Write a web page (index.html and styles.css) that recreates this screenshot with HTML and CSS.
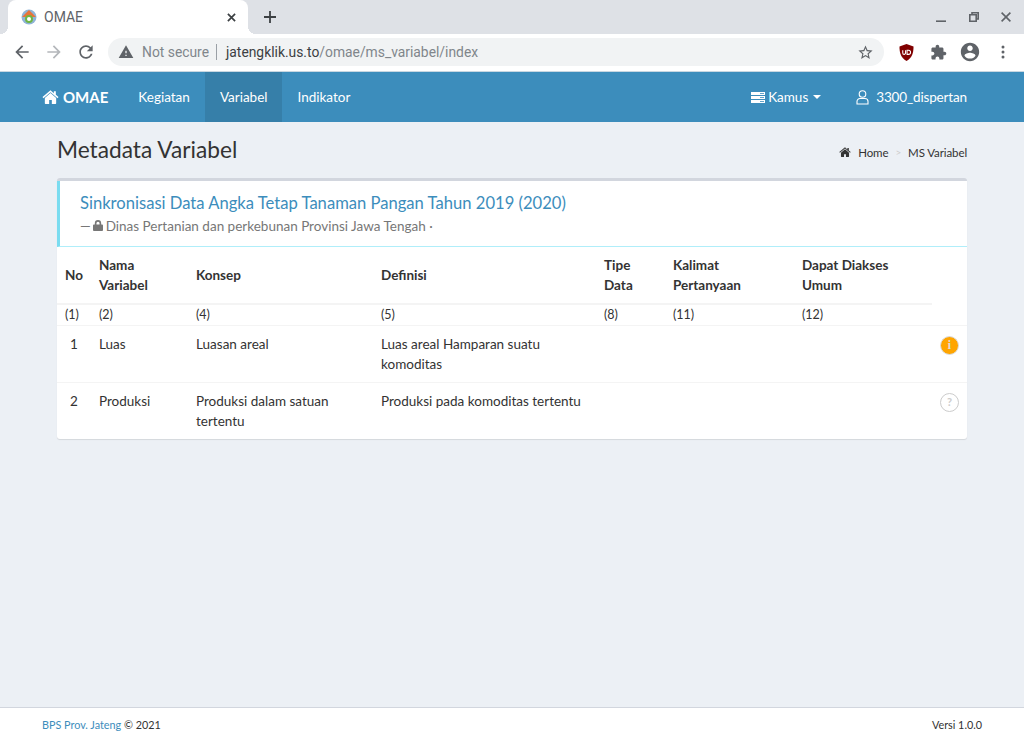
FILE: index.html
```html
<!DOCTYPE html>
<html lang="en">
<head>
    <meta charset="UTF-8">
    <title>OMAE</title>
    <link rel="stylesheet" href="styles.css">
</head>
<body>
    <div class="tabstrip">
        <div class="tab">
            <svg class="favicon" viewBox="0 0 16 16"><circle cx="8" cy="8" r="7.500" fill="#8fb4d8"/><path d="M8 1 1 8h14z" fill="#e8743b"/><circle cx="8" cy="10" r="4" fill="#6fb544"/><circle cx="8" cy="10" r="2" fill="#fff"/></svg>
            <span class="tab-title">OMAE</span>
            <svg class="tab-close" viewBox="0 0 10 10"><path d="M1 1l8 8M9 1l-8 8" stroke="#3c4043" stroke-width="1.900" fill="none"/></svg>
        </div>
        <svg class="new-tab" viewBox="0 0 12 12"><path d="M6 0v12M0 6h12" stroke="#3c4043" stroke-width="1.800" fill="none"/></svg>
        <div class="window-btns">
            <svg viewBox="0 0 10 10"><path d="M0 9.200h10" stroke="#5f6368" stroke-width="1.600"/></svg>
            <svg viewBox="0 0 10 10"><path d="M3 2.800V.8h6.200v6.200H7.200" stroke="#5f6368" stroke-width="1.600" fill="none"/><path d="M.8 2.800h6.400v6.400H.8z" stroke="#5f6368" stroke-width="1.600" fill="none"/></svg>
            <svg viewBox="0 0 10 10"><path d="M.6.6l8.800 8.800M9.400.6L.6 9.400" stroke="#5f6368" stroke-width="1.600" fill="none"/></svg>
        </div>
    </div>

    <div class="toolbar">
        <svg class="tool-icon" viewBox="0 0 24 24"><path fill="#5f6368" d="M20 11H7.830l5.590-5.590L12 4l-8 8 8 8 1.410-1.410L7.830 13H20v-2z"/></svg>
        <svg class="tool-icon" viewBox="0 0 24 24"><path fill="#b4b7bb" d="M12 4l-1.410 1.410L16.170 11H4v2h12.170l-5.580 5.590L12 20l8-8z"/></svg>
        <svg class="tool-icon" viewBox="0 0 24 24"><path fill="#5f6368" d="M17.650 6.350C16.200 4.900 14.210 4 12 4c-4.420 0-7.990 3.580-7.990 8s3.570 8 7.990 8c3.730 0 6.840-2.550 7.730-6h-2.080c-.82 2.330-3.040 4-5.650 4-3.310 0-6-2.690-6-6s2.690-6 6-6c1.660 0 3.140.69 4.220 1.780L13 11h7V4l-2.350 2.350z"/></svg>
        <div class="omnibox">
            <svg class="warn" viewBox="0 0 24 24"><path fill="#5f6368" d="M1 21h22L12 2 1 21zm12-3h-2v-2h2v2zm0-4h-2v-4h2v4z"/></svg>
            <span class="not-secure">Not secure</span>
            <span class="omni-sep"></span>
            <span class="url"><b>jatengklik.us.to</b>/omae/ms_variabel/index</span>
            <svg class="star" viewBox="0 0 24 24"><path fill="#5f6368" d="M22 9.240l-7.190-.62L12 2 9.190 8.630 2 9.240l5.460 4.730L5.820 21 12 17.270 18.180 21l-1.630-7.030L22 9.240zM12 15.400l-3.760 2.270 1-4.280-3.320-2.880 4.380-.38L12 6.100l1.710 4.040 4.380.38-3.320 2.880 1 4.280L12 15.400z"/></svg>
        </div>
        <div class="extensions">
            <svg class="ublock" viewBox="0 0 16 18"><path fill="#800000" d="M8 0l7.500 2.500c0 7-1.500 12-7.500 15.500C2 14.500.5 9.500.5 2.500z"/><path d="M4 6.500v3a1.500 1.500 0 0 0 3 0v-3M8.600 6.500h1.500a2 2 0 0 1 0 4.500H8.600z" stroke="#fff" stroke-width="1.100" fill="none"/></svg>
            <svg class="ext-icon" viewBox="0 0 24 24"><path fill="#5f6368" d="M20.500 11H19V7c0-1.100-.9-2-2-2h-4V3.500C13 2.120 11.880 1 10.500 1S8 2.120 8 3.500V5H4c-1.100 0-1.990.9-1.990 2v3.800H3.500c1.490 0 2.700 1.210 2.700 2.700s-1.210 2.700-2.700 2.700H2V20c0 1.100.9 2 2 2h3.800v-1.500c0-1.490 1.210-2.700 2.700-2.700 1.490 0 2.700 1.210 2.700 2.700V22H17c1.100 0 2-.9 2-2v-4h1.500c1.380 0 2.500-1.120 2.500-2.500S21.880 11 20.500 11z"/></svg>
            <svg class="ext-icon big" viewBox="0 0 24 24"><path fill="#5f6368" d="M12 2C6.480 2 2 6.480 2 12s4.480 10 10 10 10-4.480 10-10S17.520 2 12 2zm0 3c1.660 0 3 1.340 3 3s-1.340 3-3 3-3-1.340-3-3 1.340-3 3-3zm0 14.200c-2.500 0-4.710-1.280-6-3.220.03-1.990 4-3.080 6-3.080 1.990 0 5.970 1.090 6 3.080-1.290 1.940-3.500 3.220-6 3.220z"/></svg>
            <svg class="dots" viewBox="0 0 4 14"><circle cx="2" cy="2" r="1.500" fill="#5f6368"/><circle cx="2" cy="7" r="1.500" fill="#5f6368"/><circle cx="2" cy="12" r="1.500" fill="#5f6368"/></svg>
        </div>
    </div>

    <nav class="navbar">
        <a class="brand">
            <svg class="brand-icon" viewBox="0 0 24 21"><path fill="#fff" d="M12 4.500 3.500 12v8a1 1 0 0 0 1 1H10v-6h4v6h5.500a1 1 0 0 0 1-1v-8z"/><path fill="#fff" d="M12 .5 0 10.500l1.400 1.700L12 3.300l10.600 8.900 1.400-1.700-4-3.300V2h-3v3z"/></svg>
            OMAE
        </a>
        <a class="nav-link">Kegiatan</a>
        <a class="nav-link active">Variabel</a>
        <a class="nav-link">Indikator</a>
        <div class="nav-right">
            <a class="nav-kamus">
                <svg class="kamus-icon" viewBox="0 0 14 11"><path fill="#fff" d="M0 0h14v3H0zM0 4h14v3H0zM0 8h14v3H0z"/><path stroke="#3c8dbc" stroke-width=".8" d="M9 1.500h4M9 5.500h4M9 9.500h4"/></svg>
                Kamus <span class="caret"></span>
            </a>
            <a class="nav-user">
                <svg class="user-icon" viewBox="0 0 13 15"><circle cx="6.500" cy="4" r="3.300" fill="none" stroke="#fff" stroke-width="1.100"/><path d="M1 14V11.500A3 3 0 0 1 4 8.500h5a3 3 0 0 1 3 3V14z" fill="none" stroke="#fff" stroke-width="1.100"/></svg>
                3300_dispertan
            </a>
        </div>
    </nav>

    <main class="content">
        <div class="content-header">
            <h1>Metadata Variabel</h1>
            <ol class="breadcrumb">
                <li><svg class="crumb-icon" viewBox="0 0 24 21"><path fill="#333" d="M12 4.500 3.500 12v8a1 1 0 0 0 1 1H10v-6h4v6h5.500a1 1 0 0 0 1-1v-8z"/><path fill="#333" d="M12 .5 0 10.500l1.400 1.700L12 3.300l10.600 8.900 1.400-1.700-4-3.300V2h-3v3z"/></svg>Home</li>
                <li class="crumb-sep">&gt;</li>
                <li>MS Variabel</li>
            </ol>
        </div>

        <div class="box">
            <div class="callout">
                <h3>Sinkronisasi Data Angka Tetap Tanaman Pangan Tahun 2019 (2020)</h3>
                <p>&mdash; <svg class="lock" viewBox="0 0 11 12"><path fill="#777" d="M2 5V3.500a3.500 3.500 0 0 1 7 0V5h1a1 1 0 0 1 1 1v5a1 1 0 0 1-1 1H1a1 1 0 0 1-1-1V6a1 1 0 0 1 1-1zm1.800 0h3.400V3.500a1.700 1.700 0 0 0-3.400 0z"/></svg> Dinas Pertanian dan perkebunan Provinsi Jawa Tengah &middot;</p>
            </div>
            <table class="var-table">
                <colgroup>
                    <col class="c-no"><col class="c-nama"><col class="c-konsep"><col class="c-def"><col class="c-tipe"><col class="c-kal"><col class="c-dapat"><col class="c-act">
                </colgroup>
                <thead>
                    <tr>
                        <th>No</th><th>Nama Variabel</th><th>Konsep</th><th>Definisi</th><th>Tipe Data</th><th>Kalimat Pertanyaan</th><th>Dapat Diakses Umum</th><th class="no-line"></th>
                    </tr>
                </thead>
                <tbody>
                    <tr class="num-row">
                        <td>(1)</td><td>(2)</td><td>(4)</td><td>(5)</td><td>(8)</td><td>(11)</td><td>(12)</td><td></td>
                    </tr>
                    <tr>
                        <td class="center">1</td><td>Luas</td><td>Luasan areal</td><td>Luas areal Hamparan suatu komoditas</td><td></td><td></td><td></td>
                        <td class="act"><span class="badge info">i</span></td>
                    </tr>
                    <tr>
                        <td class="center">2</td><td>Produksi</td><td>Produksi dalam satuan tertentu</td><td>Produksi pada komoditas tertentu</td><td></td><td></td><td></td>
                        <td class="act"><span class="badge help">?</span></td>
                    </tr>
                </tbody>
            </table>
        </div>
    </main>

    <footer class="footer">
        <span><a>BPS Prov. Jateng</a> &copy; 2021</span>
        <span>Versi 1.0.0</span>
    </footer>
</body>
</html>
```

FILE: styles.css
```css
* {
    box-sizing: border-box;
}
html, body {
    height: 100%;
}
body {
    margin: 0;
    width: 1024px;
    height: 740px;
    overflow: hidden;
    display: flex;
    flex-direction: column;
    background-color: #ecf0f5;
    color: #333;
    font-family: Lato, "Open Sans", sans-serif;
    font-size: 13.5px;
}

/* browser chrome */
.tabstrip {
    height: 34px;
    flex: none;
    display: flex;
    align-items: center;
    background-color: #dee1e6;
    font-family: Roboto, sans-serif;
}
.tab {
    position: relative;
    width: 240px;
    height: 34px;
    margin-left: 8px;
    padding: 0 12px 0 13px;
    display: flex;
    align-items: center;
    background: #fff;
    border-radius: 8px 8px 0 0;
}
.tab::before, .tab::after {
    content: "";
    position: absolute;
    bottom: 0;
    width: 8px;
    height: 8px;
}
.tab::before {
    left: -8px;
    background: radial-gradient(circle at 0 0, transparent 8px, #fff 8px);
}
.tab::after {
    right: -8px;
    background: radial-gradient(circle at 100% 0, transparent 8px, #fff 8px);
}
.favicon {
    width: 16px;
    height: 16px;
}
.tab-title {
    margin-left: 7px;
    flex: 1;
    font-size: 14px;
    color: #5f6368;
}
.tab-close {
    width: 9px;
    height: 9px;
}
.new-tab {
    width: 12px;
    height: 12px;
    margin-left: 16px;
}
.window-btns {
    margin-left: auto;
    margin-right: 13px;
    display: flex;
    gap: 22.500px;
}
.window-btns svg {
    width: 10px;
    height: 10px;
}
.toolbar {
    height: 38px;
    flex: none;
    display: flex;
    align-items: center;
    padding-left: 12px;
    padding-bottom: 1px;
    background: #fff;
    border-bottom: 1px solid #c8d7e1;
    font-family: Roboto, sans-serif;
}
.tool-icon {
    width: 20px;
    height: 20px;
    margin-right: 12px;
}
.omnibox {
    width: 776px;
    height: 28px;
    padding: 0 10px;
    display: flex;
    align-items: center;
    background: #f1f3f4;
    border-radius: 14px;
    font-size: 13.850px;
}
.warn {
    width: 16px;
    height: 16px;
}
.not-secure {
    margin-left: 8px;
    color: #80868b;
}
.omni-sep {
    width: 1px;
    height: 16px;
    margin: 0 9px 0 7px;
    background: #9aa0a6;
}
.url {
    color: #80868b;
}
.url b {
    font-weight: 400;
    color: #3c4043;
}
.star {
    width: 17px;
    height: 17px;
    margin-left: auto;
}
.extensions {
    margin-left: 15px;
    display: flex;
    align-items: center;
}
.ublock {
    width: 15px;
    height: 17px;
    margin-right: 15.500px;
}
.ext-icon {
    width: 17px;
    height: 17px;
    margin-right: 12.500px;
}
.ext-icon.big {
    width: 22px;
    height: 22px;
    margin-right: 19.500px;
}
.dots {
    width: 4px;
    height: 14px;
}

/* navbar */
.navbar {
    height: 50px;
    flex: none;
    display: flex;
    align-items: stretch;
    background-color: #3c8dbc;
    color: #fff;
}
.brand {
    display: flex;
    align-items: center;
    gap: 4px;
    margin-left: 42px;
    padding-right: 15px;
    font-size: 15px;
    font-weight: 700;
}
.brand-icon {
    width: 17px;
    height: 14px;
}
.nav-link {
    display: flex;
    align-items: center;
    padding: 0 15px;
}
.nav-link.active {
    background-color: #367fa9;
}
.nav-right {
    margin-left: auto;
    margin-right: 57px;
    display: flex;
    align-items: center;
    gap: 35px;
}
.nav-kamus, .nav-user {
    display: flex;
    align-items: center;
}
.nav-user {
    letter-spacing: -0.15px;
}
.kamus-icon {
    width: 14px;
    height: 11px;
    margin-right: 3px;
}
.caret {
    width: 0;
    height: 0;
    margin-left: 5px;
    border-top: 4px solid #fff;
    border-left: 4px solid transparent;
    border-right: 4px solid transparent;
}
.user-icon {
    width: 13px;
    height: 15px;
    margin-right: 7px;
}

/* page */
.content {
    flex: 1;
    padding: 6px 57px 0;
}
.content-header {
    height: 42px;
    display: flex;
    justify-content: space-between;
    align-items: center;
}
.content-header h1 {
    margin: 0;
    font-size: 22.700px;
    font-weight: 400;
}
.breadcrumb {
    margin: 0;
    padding: 6px 0 0;
    list-style: none;
    display: flex;
    align-items: center;
    gap: 7px;
    font-size: 11.500px;
    letter-spacing: -0.1px;
}
.crumb-icon {
    width: 12px;
    height: 10px;
    margin-right: 7px;
}
.crumb-sep {
    color: #ccc;
    font-size: 10px;
}
.box {
    margin-top: 8px;
    background: #fff;
    border-top: 3px solid #d2d6de;
    border-radius: 3px;
    box-shadow: 0 1px 1px rgba(0, 0, 0, 0.1);
}
.callout {
    height: 66px;
    padding: 10px 20px 0;
    border-left: 3px solid #7adcf0;
    border-bottom: 1px solid #b0eefa;
}
.callout h3 {
    margin: 0;
    font-size: 16.600px;
    line-height: 24px;
    font-weight: 400;
    color: #3c8dbc;
}
.callout p {
    margin: 1px 0 0;
    line-height: 20px;
    color: #777;
}
.lock {
    width: 10px;
    height: 11px;
    margin-left: -1px;
    margin-right: -1px;
}
.var-table {
    width: 100%;
    table-layout: fixed;
    border-collapse: collapse;
}
.c-no { width: 34px; }
.c-nama { width: 97px; }
.c-konsep { width: 185px; }
.c-def { width: 223px; }
.c-tipe { width: 69px; }
.c-kal { width: 129px; }
.c-dapat { width: 138px; }
.c-act { width: 35px; }
.var-table th {
    height: 57px;
    padding: 8px;
    text-align: left;
    line-height: 20px;
    font-weight: 700;
    border-bottom: 2px solid #f4f4f4;
}
.var-table th.no-line {
    border-bottom: none;
}
.var-table td {
    padding: 8px;
    line-height: 20px;
    vertical-align: top;
    border-top: 1px solid #f4f4f4;
}
.var-table .num-row td {
    padding: 0 8px;
    height: 21px;
    border-top: none;
    font-size: 12.500px;
}
.var-table td.center {
    text-align: center;
}
.var-table td.act {
    padding: 10px 8px 0 8px;
}
.badge {
    display: block;
    width: 19px;
    height: 19px;
    border-radius: 50%;
    text-align: center;
    font-size: 11px;
    font-weight: 700;
    line-height: 16px;
    color: #ddd;
}
.badge.info {
    background: #ffa500;
    border: 1px solid #ddd;
    font-family: "Liberation Serif", serif;
    font-size: 12px;
}
.badge.help {
    background: #fff;
    border: 1px solid #ccc;
    color: #ccc;
}

.footer {
    height: 33px;
    flex: none;
    padding: 0 42px;
    display: flex;
    align-items: center;
    justify-content: space-between;
    background: #fff;
    border-top: 1px solid #d2d6de;
    font-size: 10.800px;
}
.footer a {
    color: #3c8dbc;
}
```
